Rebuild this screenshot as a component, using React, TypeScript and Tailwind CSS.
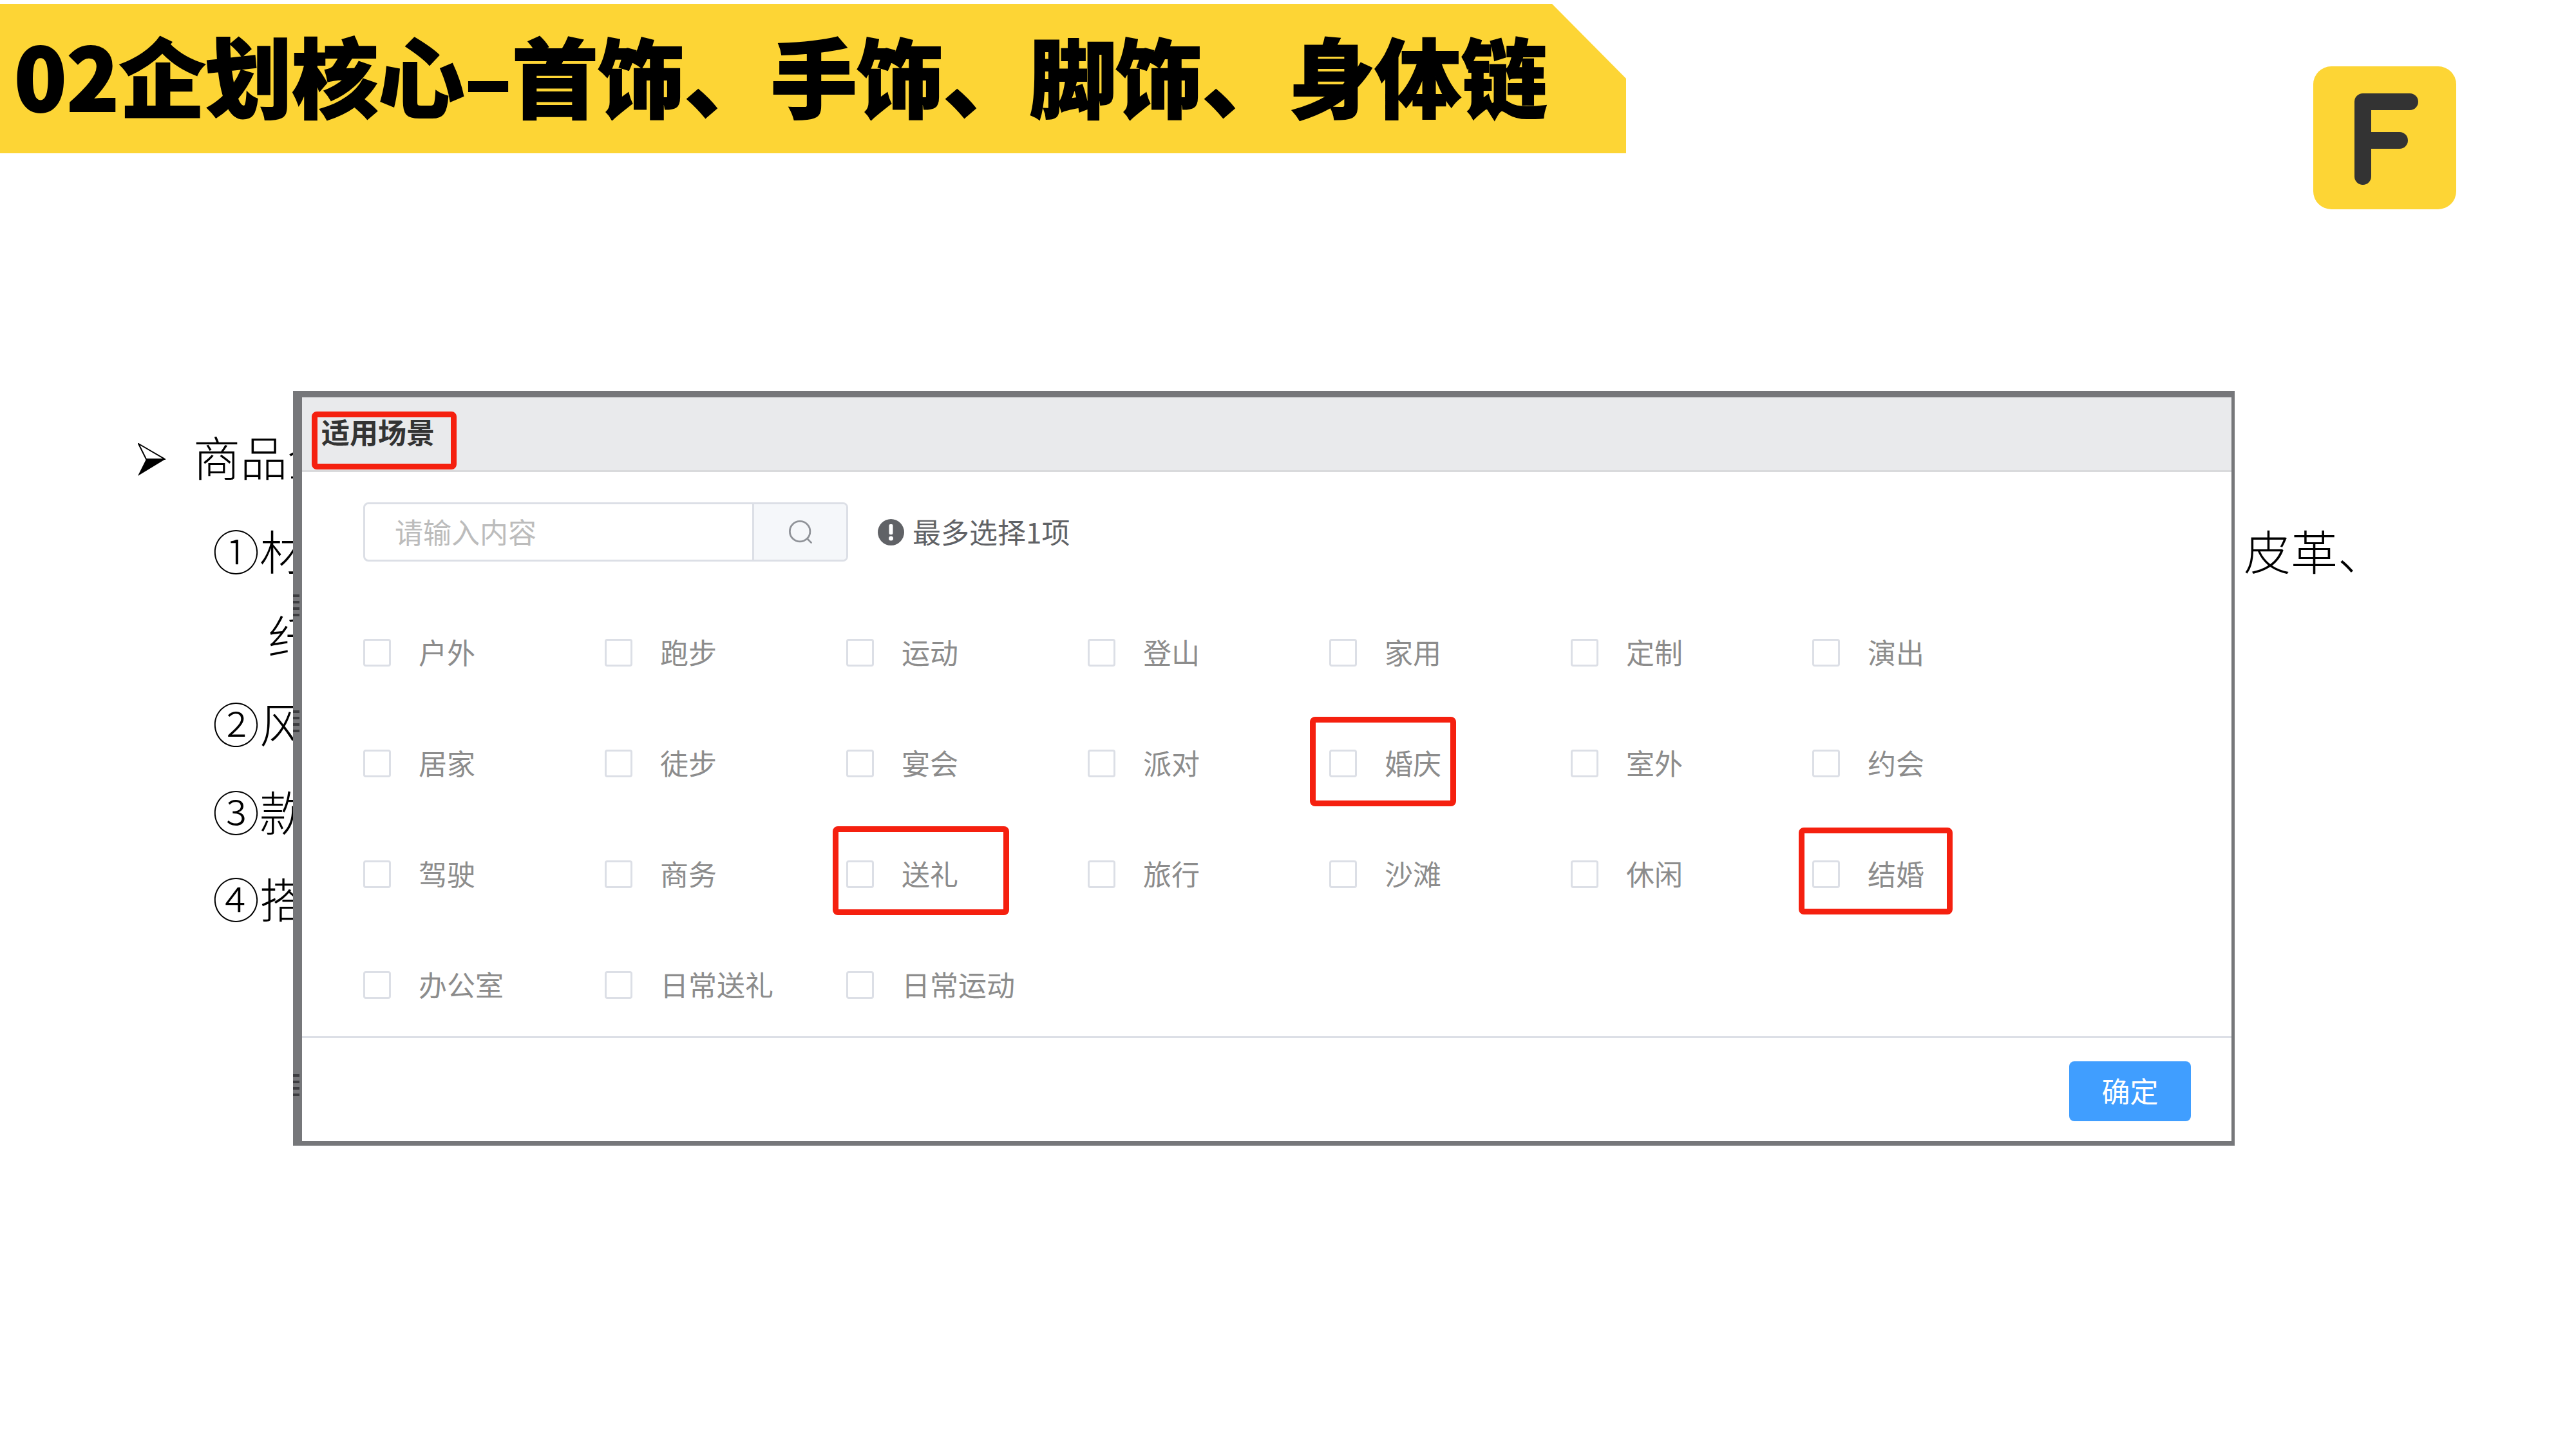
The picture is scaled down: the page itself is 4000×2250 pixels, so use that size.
import React from "react";

const serif = "font-['Liberation_Serif','Noto_Sans_CJK_SC',serif]";

interface SceneItem {
  label: string;
  mark?: string;
}

const scenes: SceneItem[] = [
  { label: "户外" },
  { label: "跑步" },
  { label: "运动" },
  { label: "登山" },
  { label: "家用" },
  { label: "定制" },
  { label: "演出" },
  { label: "居家" },
  { label: "徒步" },
  { label: "宴会" },
  { label: "派对" },
  { label: "婚庆", mark: "-left-[30px] top-[14px] w-[227px] h-[139px]" },
  { label: "室外" },
  { label: "约会" },
  { label: "驾驶" },
  { label: "商务" },
  { label: "送礼", mark: "-left-[21px] top-[12px] w-[274px] h-[138px]" },
  { label: "旅行" },
  { label: "沙滩" },
  { label: "休闲" },
  { label: "结婚", mark: "-left-[21px] top-[14px] w-[239px] h-[135px]" },
  { label: "办公室" },
  { label: "日常送礼" },
  { label: "日常运动" },
];

const Scene: React.FC<SceneItem> = ({ label, mark }) => {
  return (
    <div className="relative flex h-[172px] items-center">
      <span className="h-[43px] w-[43px] shrink-0 rounded-[4px] border-[3px] border-[#dcdfe6]" />
      <span className="mb-[3px] ml-[43px] whitespace-nowrap text-[44px] leading-none text-[#8c8c8c]">
        {label}
      </span>
      {mark && (
        <span
          className={`absolute rounded-[8px] border-[9px] border-[#f5200f] ${mark}`}
        />
      )}
    </div>
  );
};

const Arrow = () => (
  <svg width="43" height="52" viewBox="0 0 43 52" className="mr-[43px] shrink-0">
    <path d="M1 1 L42 25 L13 25 Z" fill="#fff" stroke="#000" strokeWidth="2" />
    <path d="M0 51 L43 25 L13 25 Z" fill="#000" />
  </svg>
);

const Logo = () => (
  <div className="mr-[186px] mt-[103px] h-[222px] w-[222px] rounded-[28px] bg-[#fdd535]">
    <svg width="222" height="222" viewBox="0 0 222 222" fill="none">
      <path
        d="M77 171 V55 H150 M77 115 H134"
        stroke="#333333"
        strokeWidth="26"
        strokeLinecap="round"
        strokeLinejoin="round"
      />
    </svg>
  </div>
);

// dark flecks left on the dialog's left edge in the source image
const Flecks: React.FC<{ className: string }> = ({ className }) => (
  <span
    className={`absolute -left-[14px] w-[10px] bg-[repeating-linear-gradient(180deg,#3d3d40_0_4px,#77777a_4px_10px)] ${className}`}
  />
);

const App: React.FC = () => {
  return (
    <div className="relative h-[2250px] w-[4000px] overflow-hidden bg-white font-['Noto_Sans_CJK_SC',sans-serif]">
      <header className="flex items-start justify-between">
        <div className="mt-[6px] flex h-[232px] w-[2525px] items-center bg-[#fdd535] pb-[15px] pl-[22px] [clip-path:polygon(0_0,2410px_0,100%_116px,100%_100%,0_100%)]">
          <h1 className="whitespace-nowrap text-[134px] font-black leading-none text-black [-webkit-text-stroke:2px_#000]">
            02企划核心–首饰、手饰、脚饰、身体链
          </h1>
        </div>
        <Logo />
      </header>

      {/* copy that sits behind the dialog */}
      <section className={`absolute left-0 top-[664px] w-full text-[73px] font-light leading-none text-black ${serif}`}>
        <div className="flex h-[100px] items-center pl-[214px]">
          <Arrow />
          <span className="w-[160px] overflow-hidden whitespace-nowrap">商品企</span>
        </div>
        <div className="mt-[46px] flex h-[100px] items-center pl-[330px]">
          <span className="w-[3154px] shrink-0">①材</span>
          <span>皮革、</span>
        </div>
        <div className="mt-[32px] flex h-[100px] items-center pl-[416px]">纤</div>
        <div className="mt-[36px] flex h-[100px] items-center pl-[330px]">②风</div>
        <div className="mt-[37px] flex h-[100px] items-center pl-[330px]">③款</div>
        <div className="mt-[35px] flex h-[100px] items-center pl-[330px]">④搭</div>
      </section>

      <div className="absolute left-[455px] top-[607px] flex h-[1172px] w-[3015px] flex-col border-b-[7px] border-l-[14px] border-r-[5px] border-t-[10px] border-[#76777a] bg-white">
        <Flecks className="top-[306px] h-[34px]" />
        <Flecks className="top-[486px] h-[40px]" />
        <Flecks className="top-[1051px] h-[38px]" />

        <div className="relative flex h-[116px] shrink-0 items-center border-b-[3px] border-[#d9dadc] bg-[#e9eaec] pb-[8px] pl-[30px]">
          <span className="text-[44px] font-bold leading-none text-[#333]">适用场景</span>
          <span className="absolute left-[15px] top-[22px] h-[90px] w-[225px] rounded-[8px] border-[9px] border-[#f5200f]" />
        </div>

        <div className="h-[876px] shrink-0 pl-[95px] pt-[47px]">
          <div className="flex items-center">
            <div className="flex h-[92px] w-[753px] overflow-hidden rounded-[8px] border-[3px] border-[#dcdfe6]">
              <div className="flex flex-1 items-center pb-[3px] pl-[46px] text-[44px] leading-none text-[#bcbcbc]">
                请输入内容
              </div>
              <div className="flex w-[146px] items-center justify-center border-l-[3px] border-[#dcdfe6] bg-[#f5f7fa]">
                <svg width="42" height="42" viewBox="0 0 24 24" fill="none" stroke="#909399" strokeWidth="1.6" strokeLinecap="round">
                  <circle cx="11.5" cy="11.5" r="9" />
                  <path d="M18 18 L21.5 21.5" />
                </svg>
              </div>
            </div>
            <svg width="41" height="41" viewBox="0 0 41 41" className="ml-[46px] shrink-0">
              <circle cx="20.5" cy="20.5" r="20.5" fill="#606266" />
              <rect x="17.5" y="8" width="6" height="16" rx="2" fill="#fff" />
              <circle cx="20.5" cy="30" r="3.5" fill="#fff" />
            </svg>
            <span className="mb-[3px] ml-[13px] text-[44px] leading-none text-[#606266]">最多选择1项</span>
          </div>

          <div className="mt-[55px] grid grid-cols-[repeat(7,375px)]">
            {scenes.map((item) => (
              <Scene key={item.label} {...item} />
            ))}
          </div>
        </div>

        <div className="flex flex-1 items-center justify-end border-t-[3px] border-[#dcdfe6] pr-[63px] pt-[4px]">
          <button className="flex h-[93px] w-[189px] items-center justify-center rounded-[8px] bg-[#409eff] pb-[3px] text-[44px] leading-none text-white">
            确定
          </button>
        </div>
      </div>
    </div>
  );
};

export default App;
